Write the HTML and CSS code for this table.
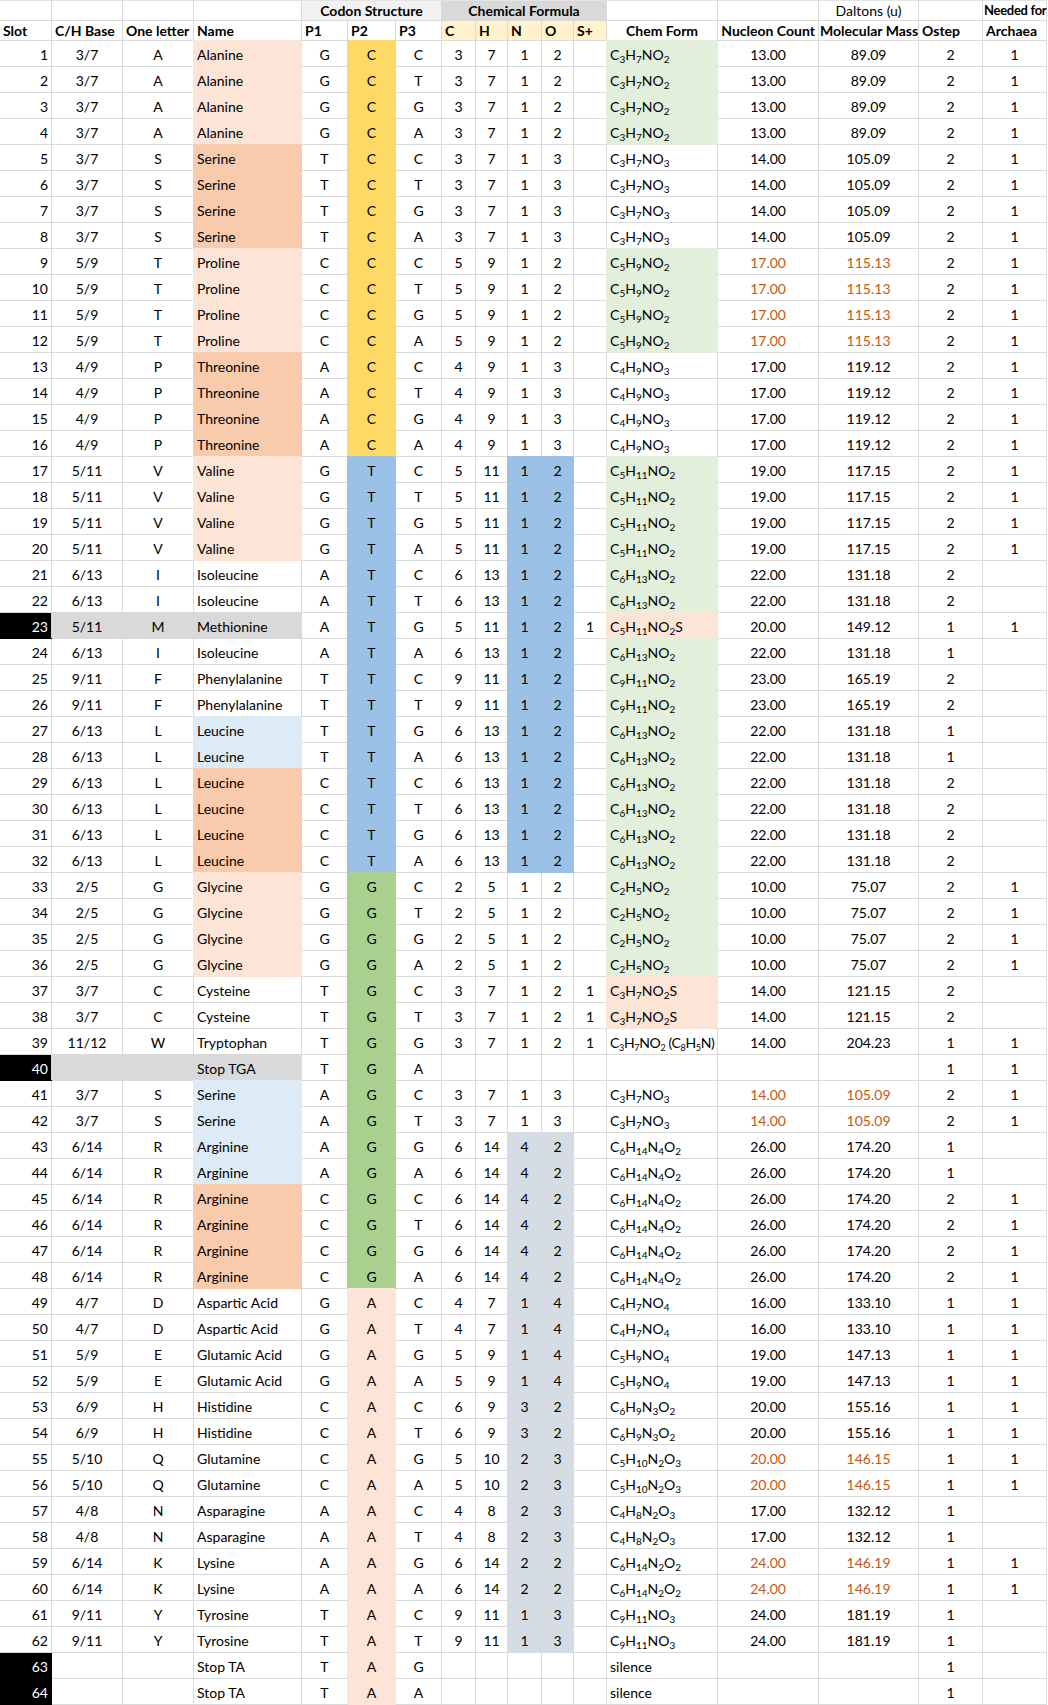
FILE: index.html
```html
<!DOCTYPE html>
<html>
<head>
<meta charset="utf-8">
<title>Codon table</title>
<link rel="stylesheet" href="styles.css">
</head>
<body>
<table class="sheet">
<colgroup>
<col class="w52"><col class="w71"><col class="w71"><col class="w108"><col class="w46"><col class="w48"><col class="w46"><col class="w34"><col class="w32"><col class="w34"><col class="w32"><col class="w33"><col class="w111"><col class="w101"><col class="w100"><col class="w64"><col class="w64">
</colgroup>
<thead>
<tr class="h1">
<th></th><th></th><th></th><th></th>
<th colspan="3" class="hg1 b">Codon Structure</th>
<th colspan="5" class="hg2 b">Chemical Formula</th>
<th></th><th></th><th class="ctr">Daltons (u)</th><th></th><th class="b lft ovf">Needed for</th>
</tr>
<tr class="h2">
<th class="b lft">Slot</th><th class="b lft">C/H Base</th><th class="b lft">One letter</th><th class="b lft">Name</th>
<th class="b lft">P1</th><th class="b lft">P2</th><th class="b lft">P3</th>
<th class="b lft hy">C</th><th class="b lft hy">H</th><th class="b lft hy">N</th><th class="b lft hy">O</th><th class="b lft hy">S+</th>
<th class="b ctr">Chem Form</th><th class="b ctr">Nucleon Count</th><th class="b ctr tight">Molecular Mass</th><th class="b lft">Ostep</th><th class="b lft">Archaea</th>
</tr>
</thead>
<tbody>
<tr><td>1</td><td>3/7</td><td>A</td><td class="pk">Alanine</td><td>G</td><td class="ye">C</td><td>C</td><td>3</td><td>7</td><td>1</td><td>2</td><td></td><td class="lg">C<sub>3</sub>H<sub>7</sub>NO<sub>2</sub></td><td>13.00</td><td>89.09</td><td>2</td><td>1</td></tr>
<tr><td>2</td><td>3/7</td><td>A</td><td class="pk">Alanine</td><td>G</td><td class="ye">C</td><td>T</td><td>3</td><td>7</td><td>1</td><td>2</td><td></td><td class="lg">C<sub>3</sub>H<sub>7</sub>NO<sub>2</sub></td><td>13.00</td><td>89.09</td><td>2</td><td>1</td></tr>
<tr><td>3</td><td>3/7</td><td>A</td><td class="pk">Alanine</td><td>G</td><td class="ye">C</td><td>G</td><td>3</td><td>7</td><td>1</td><td>2</td><td></td><td class="lg">C<sub>3</sub>H<sub>7</sub>NO<sub>2</sub></td><td>13.00</td><td>89.09</td><td>2</td><td>1</td></tr>
<tr><td>4</td><td>3/7</td><td>A</td><td class="pk">Alanine</td><td>G</td><td class="ye">C</td><td>A</td><td>3</td><td>7</td><td>1</td><td>2</td><td></td><td class="lg">C<sub>3</sub>H<sub>7</sub>NO<sub>2</sub></td><td>13.00</td><td>89.09</td><td>2</td><td>1</td></tr>
<tr><td>5</td><td>3/7</td><td>S</td><td class="pd">Serine</td><td>T</td><td class="ye">C</td><td>C</td><td>3</td><td>7</td><td>1</td><td>3</td><td></td><td>C<sub>3</sub>H<sub>7</sub>NO<sub>3</sub></td><td>14.00</td><td>105.09</td><td>2</td><td>1</td></tr>
<tr><td>6</td><td>3/7</td><td>S</td><td class="pd">Serine</td><td>T</td><td class="ye">C</td><td>T</td><td>3</td><td>7</td><td>1</td><td>3</td><td></td><td>C<sub>3</sub>H<sub>7</sub>NO<sub>3</sub></td><td>14.00</td><td>105.09</td><td>2</td><td>1</td></tr>
<tr><td>7</td><td>3/7</td><td>S</td><td class="pd">Serine</td><td>T</td><td class="ye">C</td><td>G</td><td>3</td><td>7</td><td>1</td><td>3</td><td></td><td>C<sub>3</sub>H<sub>7</sub>NO<sub>3</sub></td><td>14.00</td><td>105.09</td><td>2</td><td>1</td></tr>
<tr><td>8</td><td>3/7</td><td>S</td><td class="pd">Serine</td><td>T</td><td class="ye">C</td><td>A</td><td>3</td><td>7</td><td>1</td><td>3</td><td></td><td>C<sub>3</sub>H<sub>7</sub>NO<sub>3</sub></td><td>14.00</td><td>105.09</td><td>2</td><td>1</td></tr>
<tr><td>9</td><td>5/9</td><td>T</td><td class="pk">Proline</td><td>C</td><td class="ye">C</td><td>C</td><td>5</td><td>9</td><td>1</td><td>2</td><td></td><td class="lg">C<sub>5</sub>H<sub>9</sub>NO<sub>2</sub></td><td class="or">17.00</td><td class="or">115.13</td><td>2</td><td>1</td></tr>
<tr><td>10</td><td>5/9</td><td>T</td><td class="pk">Proline</td><td>C</td><td class="ye">C</td><td>T</td><td>5</td><td>9</td><td>1</td><td>2</td><td></td><td class="lg">C<sub>5</sub>H<sub>9</sub>NO<sub>2</sub></td><td class="or">17.00</td><td class="or">115.13</td><td>2</td><td>1</td></tr>
<tr><td>11</td><td>5/9</td><td>T</td><td class="pk">Proline</td><td>C</td><td class="ye">C</td><td>G</td><td>5</td><td>9</td><td>1</td><td>2</td><td></td><td class="lg">C<sub>5</sub>H<sub>9</sub>NO<sub>2</sub></td><td class="or">17.00</td><td class="or">115.13</td><td>2</td><td>1</td></tr>
<tr><td>12</td><td>5/9</td><td>T</td><td class="pk">Proline</td><td>C</td><td class="ye">C</td><td>A</td><td>5</td><td>9</td><td>1</td><td>2</td><td></td><td class="lg">C<sub>5</sub>H<sub>9</sub>NO<sub>2</sub></td><td class="or">17.00</td><td class="or">115.13</td><td>2</td><td>1</td></tr>
<tr><td>13</td><td>4/9</td><td>P</td><td class="pd">Threonine</td><td>A</td><td class="ye">C</td><td>C</td><td>4</td><td>9</td><td>1</td><td>3</td><td></td><td>C<sub>4</sub>H<sub>9</sub>NO<sub>3</sub></td><td>17.00</td><td>119.12</td><td>2</td><td>1</td></tr>
<tr><td>14</td><td>4/9</td><td>P</td><td class="pd">Threonine</td><td>A</td><td class="ye">C</td><td>T</td><td>4</td><td>9</td><td>1</td><td>3</td><td></td><td>C<sub>4</sub>H<sub>9</sub>NO<sub>3</sub></td><td>17.00</td><td>119.12</td><td>2</td><td>1</td></tr>
<tr><td>15</td><td>4/9</td><td>P</td><td class="pd">Threonine</td><td>A</td><td class="ye">C</td><td>G</td><td>4</td><td>9</td><td>1</td><td>3</td><td></td><td>C<sub>4</sub>H<sub>9</sub>NO<sub>3</sub></td><td>17.00</td><td>119.12</td><td>2</td><td>1</td></tr>
<tr><td>16</td><td>4/9</td><td>P</td><td class="pd">Threonine</td><td>A</td><td class="ye">C</td><td>A</td><td>4</td><td>9</td><td>1</td><td>3</td><td></td><td>C<sub>4</sub>H<sub>9</sub>NO<sub>3</sub></td><td>17.00</td><td>119.12</td><td>2</td><td>1</td></tr>
<tr><td>17</td><td>5/11</td><td>V</td><td class="pk">Valine</td><td>G</td><td class="bl">T</td><td>C</td><td>5</td><td>11</td><td class="bl">1</td><td class="bl">2</td><td></td><td class="lg">C<sub>5</sub>H<sub>11</sub>NO<sub>2</sub></td><td>19.00</td><td>117.15</td><td>2</td><td>1</td></tr>
<tr><td>18</td><td>5/11</td><td>V</td><td class="pk">Valine</td><td>G</td><td class="bl">T</td><td>T</td><td>5</td><td>11</td><td class="bl">1</td><td class="bl">2</td><td></td><td class="lg">C<sub>5</sub>H<sub>11</sub>NO<sub>2</sub></td><td>19.00</td><td>117.15</td><td>2</td><td>1</td></tr>
<tr><td>19</td><td>5/11</td><td>V</td><td class="pk">Valine</td><td>G</td><td class="bl">T</td><td>G</td><td>5</td><td>11</td><td class="bl">1</td><td class="bl">2</td><td></td><td class="lg">C<sub>5</sub>H<sub>11</sub>NO<sub>2</sub></td><td>19.00</td><td>117.15</td><td>2</td><td>1</td></tr>
<tr><td>20</td><td>5/11</td><td>V</td><td class="pk">Valine</td><td>G</td><td class="bl">T</td><td>A</td><td>5</td><td>11</td><td class="bl">1</td><td class="bl">2</td><td></td><td class="lg">C<sub>5</sub>H<sub>11</sub>NO<sub>2</sub></td><td>19.00</td><td>117.15</td><td>2</td><td>1</td></tr>
<tr><td>21</td><td>6/13</td><td>I</td><td>Isoleucine</td><td>A</td><td class="bl">T</td><td>C</td><td>6</td><td>13</td><td class="bl">1</td><td class="bl">2</td><td></td><td class="lg">C<sub>6</sub>H<sub>13</sub>NO<sub>2</sub></td><td>22.00</td><td>131.18</td><td>2</td><td></td></tr>
<tr><td>22</td><td>6/13</td><td>I</td><td>Isoleucine</td><td>A</td><td class="bl">T</td><td>T</td><td>6</td><td>13</td><td class="bl">1</td><td class="bl">2</td><td></td><td class="lg">C<sub>6</sub>H<sub>13</sub>NO<sub>2</sub></td><td>22.00</td><td>131.18</td><td>2</td><td></td></tr>
<tr><td class="blk">23</td><td class="gy">5/11</td><td class="gy">M</td><td class="gy">Methionine</td><td>A</td><td class="bl">T</td><td>G</td><td>5</td><td>11</td><td class="bl">1</td><td class="bl">2</td><td>1</td><td class="pk">C<sub>5</sub>H<sub>11</sub>NO<sub>2</sub>S</td><td>20.00</td><td>149.12</td><td>1</td><td>1</td></tr>
<tr><td>24</td><td>6/13</td><td>I</td><td>Isoleucine</td><td>A</td><td class="bl">T</td><td>A</td><td>6</td><td>13</td><td class="bl">1</td><td class="bl">2</td><td></td><td class="lg">C<sub>6</sub>H<sub>13</sub>NO<sub>2</sub></td><td>22.00</td><td>131.18</td><td>1</td><td></td></tr>
<tr><td>25</td><td>9/11</td><td>F</td><td>Phenylalanine</td><td>T</td><td class="bl">T</td><td>C</td><td>9</td><td>11</td><td class="bl">1</td><td class="bl">2</td><td></td><td class="lg">C<sub>9</sub>H<sub>11</sub>NO<sub>2</sub></td><td>23.00</td><td>165.19</td><td>2</td><td></td></tr>
<tr><td>26</td><td>9/11</td><td>F</td><td>Phenylalanine</td><td>T</td><td class="bl">T</td><td>T</td><td>9</td><td>11</td><td class="bl">1</td><td class="bl">2</td><td></td><td class="lg">C<sub>9</sub>H<sub>11</sub>NO<sub>2</sub></td><td>23.00</td><td>165.19</td><td>2</td><td></td></tr>
<tr><td>27</td><td>6/13</td><td>L</td><td class="lb">Leucine</td><td>T</td><td class="bl">T</td><td>G</td><td>6</td><td>13</td><td class="bl">1</td><td class="bl">2</td><td></td><td class="lg">C<sub>6</sub>H<sub>13</sub>NO<sub>2</sub></td><td>22.00</td><td>131.18</td><td>1</td><td></td></tr>
<tr><td>28</td><td>6/13</td><td>L</td><td class="lb">Leucine</td><td>T</td><td class="bl">T</td><td>A</td><td>6</td><td>13</td><td class="bl">1</td><td class="bl">2</td><td></td><td class="lg">C<sub>6</sub>H<sub>13</sub>NO<sub>2</sub></td><td>22.00</td><td>131.18</td><td>1</td><td></td></tr>
<tr><td>29</td><td>6/13</td><td>L</td><td class="pd">Leucine</td><td>C</td><td class="bl">T</td><td>C</td><td>6</td><td>13</td><td class="bl">1</td><td class="bl">2</td><td></td><td class="lg">C<sub>6</sub>H<sub>13</sub>NO<sub>2</sub></td><td>22.00</td><td>131.18</td><td>2</td><td></td></tr>
<tr><td>30</td><td>6/13</td><td>L</td><td class="pd">Leucine</td><td>C</td><td class="bl">T</td><td>T</td><td>6</td><td>13</td><td class="bl">1</td><td class="bl">2</td><td></td><td class="lg">C<sub>6</sub>H<sub>13</sub>NO<sub>2</sub></td><td>22.00</td><td>131.18</td><td>2</td><td></td></tr>
<tr><td>31</td><td>6/13</td><td>L</td><td class="pd">Leucine</td><td>C</td><td class="bl">T</td><td>G</td><td>6</td><td>13</td><td class="bl">1</td><td class="bl">2</td><td></td><td class="lg">C<sub>6</sub>H<sub>13</sub>NO<sub>2</sub></td><td>22.00</td><td>131.18</td><td>2</td><td></td></tr>
<tr><td>32</td><td>6/13</td><td>L</td><td class="pd">Leucine</td><td>C</td><td class="bl">T</td><td>A</td><td>6</td><td>13</td><td class="bl">1</td><td class="bl">2</td><td></td><td class="lg">C<sub>6</sub>H<sub>13</sub>NO<sub>2</sub></td><td>22.00</td><td>131.18</td><td>2</td><td></td></tr>
<tr><td>33</td><td>2/5</td><td>G</td><td class="pk">Glycine</td><td>G</td><td class="gr">G</td><td>C</td><td>2</td><td>5</td><td>1</td><td>2</td><td></td><td class="lg">C<sub>2</sub>H<sub>5</sub>NO<sub>2</sub></td><td>10.00</td><td>75.07</td><td>2</td><td>1</td></tr>
<tr><td>34</td><td>2/5</td><td>G</td><td class="pk">Glycine</td><td>G</td><td class="gr">G</td><td>T</td><td>2</td><td>5</td><td>1</td><td>2</td><td></td><td class="lg">C<sub>2</sub>H<sub>5</sub>NO<sub>2</sub></td><td>10.00</td><td>75.07</td><td>2</td><td>1</td></tr>
<tr><td>35</td><td>2/5</td><td>G</td><td class="pk">Glycine</td><td>G</td><td class="gr">G</td><td>G</td><td>2</td><td>5</td><td>1</td><td>2</td><td></td><td class="lg">C<sub>2</sub>H<sub>5</sub>NO<sub>2</sub></td><td>10.00</td><td>75.07</td><td>2</td><td>1</td></tr>
<tr><td>36</td><td>2/5</td><td>G</td><td class="pk">Glycine</td><td>G</td><td class="gr">G</td><td>A</td><td>2</td><td>5</td><td>1</td><td>2</td><td></td><td class="lg">C<sub>2</sub>H<sub>5</sub>NO<sub>2</sub></td><td>10.00</td><td>75.07</td><td>2</td><td>1</td></tr>
<tr><td>37</td><td>3/7</td><td>C</td><td>Cysteine</td><td>T</td><td class="gr">G</td><td>C</td><td>3</td><td>7</td><td>1</td><td>2</td><td>1</td><td class="pk">C<sub>3</sub>H<sub>7</sub>NO<sub>2</sub>S</td><td>14.00</td><td>121.15</td><td>2</td><td></td></tr>
<tr><td>38</td><td>3/7</td><td>C</td><td>Cysteine</td><td>T</td><td class="gr">G</td><td>T</td><td>3</td><td>7</td><td>1</td><td>2</td><td>1</td><td class="pk">C<sub>3</sub>H<sub>7</sub>NO<sub>2</sub>S</td><td>14.00</td><td>121.15</td><td>2</td><td></td></tr>
<tr><td>39</td><td>11/12</td><td>W</td><td>Tryptophan</td><td>T</td><td class="gr">G</td><td>G</td><td>3</td><td>7</td><td>1</td><td>2</td><td>1</td><td class="trp">C<sub>3</sub>H<sub>7</sub>NO<sub>2</sub> (C<sub>8</sub>H<sub>5</sub>N)</td><td>14.00</td><td>204.23</td><td>1</td><td>1</td></tr>
<tr><td class="blk">40</td><td class="gy"></td><td class="gy"></td><td class="gy">Stop TGA</td><td>T</td><td class="gr">G</td><td>A</td><td></td><td></td><td></td><td></td><td></td><td></td><td></td><td></td><td>1</td><td>1</td></tr>
<tr><td>41</td><td>3/7</td><td>S</td><td class="lb">Serine</td><td>A</td><td class="gr">G</td><td>C</td><td>3</td><td>7</td><td>1</td><td>3</td><td></td><td>C<sub>3</sub>H<sub>7</sub>NO<sub>3</sub></td><td class="or">14.00</td><td class="or">105.09</td><td>2</td><td>1</td></tr>
<tr><td>42</td><td>3/7</td><td>S</td><td class="lb">Serine</td><td>A</td><td class="gr">G</td><td>T</td><td>3</td><td>7</td><td>1</td><td>3</td><td></td><td>C<sub>3</sub>H<sub>7</sub>NO<sub>3</sub></td><td class="or">14.00</td><td class="or">105.09</td><td>2</td><td>1</td></tr>
<tr><td>43</td><td>6/14</td><td>R</td><td class="lb">Arginine</td><td>A</td><td class="gr">G</td><td>G</td><td>6</td><td>14</td><td class="gb">4</td><td class="gb">2</td><td></td><td>C<sub>6</sub>H<sub>14</sub>N<sub>4</sub>O<sub>2</sub></td><td>26.00</td><td>174.20</td><td>1</td><td></td></tr>
<tr><td>44</td><td>6/14</td><td>R</td><td class="lb">Arginine</td><td>A</td><td class="gr">G</td><td>A</td><td>6</td><td>14</td><td class="gb">4</td><td class="gb">2</td><td></td><td>C<sub>6</sub>H<sub>14</sub>N<sub>4</sub>O<sub>2</sub></td><td>26.00</td><td>174.20</td><td>1</td><td></td></tr>
<tr><td>45</td><td>6/14</td><td>R</td><td class="pd">Arginine</td><td>C</td><td class="gr">G</td><td>C</td><td>6</td><td>14</td><td class="gb">4</td><td class="gb">2</td><td></td><td>C<sub>6</sub>H<sub>14</sub>N<sub>4</sub>O<sub>2</sub></td><td>26.00</td><td>174.20</td><td>2</td><td>1</td></tr>
<tr><td>46</td><td>6/14</td><td>R</td><td class="pd">Arginine</td><td>C</td><td class="gr">G</td><td>T</td><td>6</td><td>14</td><td class="gb">4</td><td class="gb">2</td><td></td><td>C<sub>6</sub>H<sub>14</sub>N<sub>4</sub>O<sub>2</sub></td><td>26.00</td><td>174.20</td><td>2</td><td>1</td></tr>
<tr><td>47</td><td>6/14</td><td>R</td><td class="pd">Arginine</td><td>C</td><td class="gr">G</td><td>G</td><td>6</td><td>14</td><td class="gb">4</td><td class="gb">2</td><td></td><td>C<sub>6</sub>H<sub>14</sub>N<sub>4</sub>O<sub>2</sub></td><td>26.00</td><td>174.20</td><td>2</td><td>1</td></tr>
<tr><td>48</td><td>6/14</td><td>R</td><td class="pd">Arginine</td><td>C</td><td class="gr">G</td><td>A</td><td>6</td><td>14</td><td class="gb">4</td><td class="gb">2</td><td></td><td>C<sub>6</sub>H<sub>14</sub>N<sub>4</sub>O<sub>2</sub></td><td>26.00</td><td>174.20</td><td>2</td><td>1</td></tr>
<tr><td>49</td><td>4/7</td><td>D</td><td>Aspartic Acid</td><td>G</td><td class="pk">A</td><td>C</td><td>4</td><td>7</td><td class="gb">1</td><td class="gb">4</td><td></td><td>C<sub>4</sub>H<sub>7</sub>NO<sub>4</sub></td><td>16.00</td><td>133.10</td><td>1</td><td>1</td></tr>
<tr><td>50</td><td>4/7</td><td>D</td><td>Aspartic Acid</td><td>G</td><td class="pk">A</td><td>T</td><td>4</td><td>7</td><td class="gb">1</td><td class="gb">4</td><td></td><td>C<sub>4</sub>H<sub>7</sub>NO<sub>4</sub></td><td>16.00</td><td>133.10</td><td>1</td><td>1</td></tr>
<tr><td>51</td><td>5/9</td><td>E</td><td>Glutamic Acid</td><td>G</td><td class="pk">A</td><td>G</td><td>5</td><td>9</td><td class="gb">1</td><td class="gb">4</td><td></td><td>C<sub>5</sub>H<sub>9</sub>NO<sub>4</sub></td><td>19.00</td><td>147.13</td><td>1</td><td>1</td></tr>
<tr><td>52</td><td>5/9</td><td>E</td><td>Glutamic Acid</td><td>G</td><td class="pk">A</td><td>A</td><td>5</td><td>9</td><td class="gb">1</td><td class="gb">4</td><td></td><td>C<sub>5</sub>H<sub>9</sub>NO<sub>4</sub></td><td>19.00</td><td>147.13</td><td>1</td><td>1</td></tr>
<tr><td>53</td><td>6/9</td><td>H</td><td>Histidine</td><td>C</td><td class="pk">A</td><td>C</td><td>6</td><td>9</td><td class="gb">3</td><td class="gb">2</td><td></td><td>C<sub>6</sub>H<sub>9</sub>N<sub>3</sub>O<sub>2</sub></td><td>20.00</td><td>155.16</td><td>1</td><td>1</td></tr>
<tr><td>54</td><td>6/9</td><td>H</td><td>Histidine</td><td>C</td><td class="pk">A</td><td>T</td><td>6</td><td>9</td><td class="gb">3</td><td class="gb">2</td><td></td><td>C<sub>6</sub>H<sub>9</sub>N<sub>3</sub>O<sub>2</sub></td><td>20.00</td><td>155.16</td><td>1</td><td>1</td></tr>
<tr><td>55</td><td>5/10</td><td>Q</td><td>Glutamine</td><td>C</td><td class="pk">A</td><td>G</td><td>5</td><td>10</td><td class="gb">2</td><td class="gb">3</td><td></td><td>C<sub>5</sub>H<sub>10</sub>N<sub>2</sub>O<sub>3</sub></td><td class="or">20.00</td><td class="or">146.15</td><td>1</td><td>1</td></tr>
<tr><td>56</td><td>5/10</td><td>Q</td><td>Glutamine</td><td>C</td><td class="pk">A</td><td>A</td><td>5</td><td>10</td><td class="gb">2</td><td class="gb">3</td><td></td><td>C<sub>5</sub>H<sub>10</sub>N<sub>2</sub>O<sub>3</sub></td><td class="or">20.00</td><td class="or">146.15</td><td>1</td><td>1</td></tr>
<tr><td>57</td><td>4/8</td><td>N</td><td>Asparagine</td><td>A</td><td class="pk">A</td><td>C</td><td>4</td><td>8</td><td class="gb">2</td><td class="gb">3</td><td></td><td>C<sub>4</sub>H<sub>8</sub>N<sub>2</sub>O<sub>3</sub></td><td>17.00</td><td>132.12</td><td>1</td><td></td></tr>
<tr><td>58</td><td>4/8</td><td>N</td><td>Asparagine</td><td>A</td><td class="pk">A</td><td>T</td><td>4</td><td>8</td><td class="gb">2</td><td class="gb">3</td><td></td><td>C<sub>4</sub>H<sub>8</sub>N<sub>2</sub>O<sub>3</sub></td><td>17.00</td><td>132.12</td><td>1</td><td></td></tr>
<tr><td>59</td><td>6/14</td><td>K</td><td>Lysine</td><td>A</td><td class="pk">A</td><td>G</td><td>6</td><td>14</td><td class="gb">2</td><td class="gb">2</td><td></td><td>C<sub>6</sub>H<sub>14</sub>N<sub>2</sub>O<sub>2</sub></td><td class="or">24.00</td><td class="or">146.19</td><td>1</td><td>1</td></tr>
<tr><td>60</td><td>6/14</td><td>K</td><td>Lysine</td><td>A</td><td class="pk">A</td><td>A</td><td>6</td><td>14</td><td class="gb">2</td><td class="gb">2</td><td></td><td>C<sub>6</sub>H<sub>14</sub>N<sub>2</sub>O<sub>2</sub></td><td class="or">24.00</td><td class="or">146.19</td><td>1</td><td>1</td></tr>
<tr><td>61</td><td>9/11</td><td>Y</td><td>Tyrosine</td><td>T</td><td class="pk">A</td><td>C</td><td>9</td><td>11</td><td class="gb">1</td><td class="gb">3</td><td></td><td>C<sub>9</sub>H<sub>11</sub>NO<sub>3</sub></td><td>24.00</td><td>181.19</td><td>1</td><td></td></tr>
<tr><td>62</td><td>9/11</td><td>Y</td><td>Tyrosine</td><td>T</td><td class="pk">A</td><td>T</td><td>9</td><td>11</td><td class="gb">1</td><td class="gb">3</td><td></td><td>C<sub>9</sub>H<sub>11</sub>NO<sub>3</sub></td><td>24.00</td><td>181.19</td><td>1</td><td></td></tr>
<tr><td class="blk">63</td><td></td><td></td><td>Stop TA</td><td>T</td><td class="pk">A</td><td>G</td><td></td><td></td><td></td><td></td><td></td><td>silence</td><td></td><td></td><td>1</td><td></td></tr>
<tr><td class="blk">64</td><td></td><td></td><td>Stop TA</td><td>T</td><td class="pk">A</td><td>A</td><td></td><td></td><td></td><td></td><td></td><td>silence</td><td></td><td></td><td>1</td><td></td></tr>
</tbody>
</table>
</body>
</html>
```
FILE: styles.css
```css
html, body {
  margin: 0;
  padding: 0;
  background: #ffffff;
}

.sheet {
  border-collapse: separate;
  border-spacing: 0;
  table-layout: fixed;
  width: 1047px;
  font-family: Lato, "Open Sans", sans-serif;
  font-size: 14px;
  color: #000000;
}

.w52 { width: 52px; }
.w71 { width: 71px; }
.w108 { width: 108px; }
.w46 { width: 46px; }
.w48 { width: 48px; }
.w34 { width: 34px; }
.w32 { width: 32px; }
.w33 { width: 33px; }
.w111 { width: 111px; }
.w101 { width: 101px; }
.w100 { width: 100px; }
.w64 { width: 64px; }

.sheet th,
.sheet td {
  box-sizing: border-box;
  border-right: 1px solid #dadada;
  border-bottom: 1px solid #dadada;
  padding: 0 3px;
  white-space: nowrap;
  overflow: hidden;
  line-height: 17px;
  font-weight: normal;
  text-align: center;
}

.sheet thead th {
  height: 20px;
  vertical-align: bottom;
  padding-bottom: 1px;
}

.sheet thead .h1 th {
  border-top: 1px solid #e4e4e4;
  height: 21px;
}

.sheet tbody td {
  height: 26px;
  vertical-align: middle;
  padding-top: 2px;
}

.sheet tbody td:nth-child(1) { text-align: right; }
.sheet tbody td:nth-child(4) { text-align: left; }
.sheet tbody td:nth-child(13) { text-align: left; }

.b { font-weight: bold !important; }
.lft { text-align: left !important; }
.ctr { text-align: center !important; }
.tight { padding: 0 1px 1px !important; }
.sheet thead th.ovf {
  overflow: visible;
  padding-left: 1px;
  padding-right: 0;
  font-size: 13px;
  letter-spacing: -0.3px;
}

.hg1 { background: #f2f2f2; }
.hg2 { background: #d9d9d9; }
.hy { background: #fff2cc; }

.sheet sub {
  font-size: 10px;
  line-height: 0;
  vertical-align: -3px;
}

.trp {
  letter-spacing: -0.35px;
  padding-right: 0 !important;
}

.trp sub {
  font-size: 9px;
}

.or { color: #c65911; }

.blk { background: #000000; color: #ffffff; border-color: #000000 !important; }
.gy { background: #d9d9d9; border-color: #d9d9d9 !important; box-shadow: -1px -1px 0 0 #d9d9d9; }
.pk { background: #fce4d6; border-color: #fce4d6 !important; box-shadow: -1px -1px 0 0 #fce4d6; }
.pd { background: #f8cbad; border-color: #f8cbad !important; box-shadow: -1px -1px 0 0 #f8cbad; }
.lb { background: #ddebf7; border-color: #ddebf7 !important; box-shadow: -1px -1px 0 0 #ddebf7; }
.ye { background: #ffd966; border-color: #ffd966 !important; box-shadow: -1px -1px 0 0 #ffd966; }
.bl { background: #9bc2e6; border-color: #9bc2e6 !important; box-shadow: -1px -1px 0 0 #9bc2e6; }
.gr { background: #a9d08e; border-color: #a9d08e !important; box-shadow: -1px -1px 0 0 #a9d08e; }
.lg { background: #e2efda; border-color: #e2efda !important; box-shadow: -1px -1px 0 0 #e2efda; }
.gb { background: #d6dce4; border-color: #d6dce4 !important; box-shadow: -1px -1px 0 0 #d6dce4; }
```
